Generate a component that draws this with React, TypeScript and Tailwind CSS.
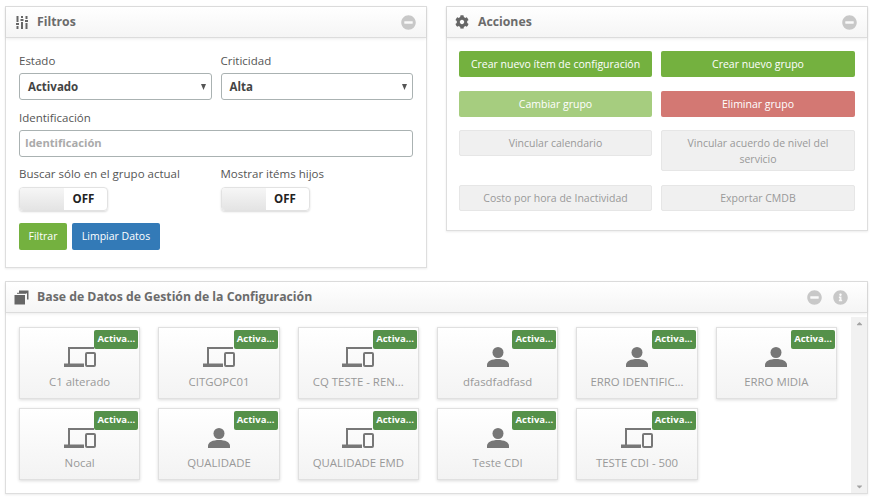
import { FC, ReactNode } from 'react';
import { FaCog, FaInfoCircle, FaMinusCircle, FaCaretDown, FaCaretUp } from 'react-icons/fa';

const SlidersIcon: FC = () => (
	<svg width="12" height="13" viewBox="0 0 12 13" fill="#666" className="shrink-0">
		<rect x="0.500" y="0" width="2" height="6" />
		<rect x="0" y="7" width="3" height="2" />
		<rect x="0.500" y="10" width="2" height="3" />
		<rect x="5" y="0" width="2" height="2" />
		<rect x="4.500" y="3" width="3" height="2" />
		<rect x="5" y="6" width="2" height="7" />
		<rect x="9.500" y="0" width="2" height="3" />
		<rect x="9" y="4" width="3" height="2" />
		<rect x="9.500" y="7" width="2" height="6" />
	</svg>
);

const StackIcon: FC = () => (
	<svg width="15" height="15" viewBox="0 0 15 15" fill="#666" className="shrink-0">
		<path d="M5 0.500h9.500v9h-1.500v-6.500h-8z" />
		<path d="M3 2.800h9.500v1h-9.500z" />
		<path d="M0.500 5h10.500v9.500h-10.500z" />
	</svg>
);

const DevicesIcon: FC = () => (
	<svg width="32" height="20" viewBox="0 0 32 20" fill="none" className="shrink-0">
		<path d="M5 17V1h25" stroke="#777" strokeWidth="2" />
		<path d="M0 18.250h20" stroke="#777" strokeWidth="3.500" />
		<rect x="22" y="6" width="9" height="13" rx="1" stroke="#777" strokeWidth="2" fill="#fafafa" />
	</svg>
);

const UserIcon: FC = () => (
	<svg width="22" height="20" viewBox="0 0 22 20" fill="#777" className="shrink-0">
		<circle cx="11" cy="5.500" r="5.500" />
		<path d="M0 20v-2c0-4 5-6 11-6s11 2 11 6v2z" />
	</svg>
);

const SelectCaret: FC = () => (
	<svg width="5" height="6" viewBox="0 0 5 6" fill="#555" className="shrink-0">
		<path d="M0 0h5L2.500 6z" />
	</svg>
);

const Panel: FC<{
	title: string;
	icon: ReactNode;
	actions?: ReactNode;
	className?: string;
	children: ReactNode;
}> = ({ title, icon, actions, className = '', children }) => (
	<section className={`border border-[#dedede] bg-white shadow-[0_1px_2px_rgba(0,0,0,0.08)] ${className}`}>
		<header className="flex h-[31px] items-center gap-[8px] border-b border-[#dcdcdc] bg-gradient-to-b from-white to-[#f5f5f5] pl-[8px] pr-[10px] shadow-[0_1px_3px_rgba(0,0,0,0.08)]">
			<span className="flex w-[15px] justify-center">{icon}</span>
			<h2 className="flex-1 text-[12.250px] font-bold text-[#6b6b6b]">{title}</h2>
			{actions ?? <FaMinusCircle className="text-[15px] text-[#c8c8c8]" />}
		</header>
		{children}
	</section>
);

const SelectBox: FC<{ value: string }> = ({ value }) => (
	<div className="flex h-[27px] items-center justify-between rounded-[3px] border border-[#aab2b2] bg-white pl-[8px] pr-[5px] text-[11.500px] font-bold text-[#444]">
		<span>{value}</span>
		<SelectCaret />
	</div>
);

const Toggle: FC = () => (
	<div className="flex h-[24px] w-[89px] overflow-hidden rounded-[4px] border border-[#e2e2e2] shadow-[0_1px_2px_rgba(0,0,0,0.15)]">
		<div className="w-[44px] bg-gradient-to-b from-[#f6f6f6] to-[#e4e4e4]" />
		<div className="flex flex-1 items-center justify-center pr-[4px] text-[11.500px] font-bold text-[#222]">OFF</div>
	</div>
);

const ActionButton: FC<{ className: string; children: ReactNode }> = ({ className, children }) => (
	<button type="button" className={`flex items-center justify-center rounded-[2px] px-[8px] text-center text-[10.500px] leading-[16px] ${className}`}>
		{children}
	</button>
);

type CiItem = { name: string; kind: 'device' | 'user' };

const items: CiItem[] = [
	{ name: 'C1 alterado', kind: 'device' },
	{ name: 'CITGOPC01', kind: 'device' },
	{ name: 'CQ TESTE - REN...', kind: 'device' },
	{ name: 'dfasdfadfasd', kind: 'user' },
	{ name: 'ERRO IDENTIFIC...', kind: 'user' },
	{ name: 'ERRO MIDIA', kind: 'user' },
	{ name: 'Nocal', kind: 'device' },
	{ name: 'QUALIDADE', kind: 'user' },
	{ name: 'QUALIDADE EMD', kind: 'device' },
	{ name: 'Teste CDI', kind: 'user' },
	{ name: 'TESTE CDI - 500', kind: 'device' },
];

const CiCard: FC<{ item: CiItem }> = ({ item }) => (
	<div className="relative flex h-[72px] flex-col items-center border border-[#e0e0e0] bg-gradient-to-b from-white to-[#f3f3f3] pt-[19px] shadow-[0_1px_3px_rgba(0,0,0,0.15)]">
		<span className="absolute right-[1px] top-[2px] flex h-[19px] w-[44px] items-center justify-center rounded-[2px] bg-[#55914a] text-[9.500px] font-bold text-white">
			Activa...
		</span>
		<div className="flex h-[20px] items-end">{item.kind === 'device' ? <DevicesIcon /> : <UserIcon />}</div>
		<span className="mt-[6px] text-[11.400px] text-[#999]">{item.name}</span>
	</div>
);

export default function App() {
	return (
		<div className="flex h-[502px] w-[884px] flex-col gap-[13px] overflow-hidden bg-white pl-[5px] pt-[6px] font-['Open_Sans',sans-serif]">
			<div className="flex items-start gap-[19px]">
				<Panel title="Filtros" icon={<SlidersIcon />} className="h-[262px] w-[422px]">
					<div className="px-[13px] pt-[15px]">
						<div className="grid grid-cols-2 gap-x-[9px]">
							<div>
								<label className="mb-[4px] block text-[11.500px] leading-[16px] text-[#555]">Estado</label>
								<SelectBox value="Activado" />
							</div>
							<div>
								<label className="mb-[4px] block text-[11.500px] leading-[16px] text-[#555]">Criticidad</label>
								<SelectBox value="Alta" />
							</div>
						</div>
						<label className="mb-[4px] mt-[10px] block text-[11.500px] leading-[16px] text-[#555]">Identificación</label>
						<div className="flex h-[27px] items-center rounded-[3px] border border-[#aab2b2] px-[5px] text-[11.200px] font-bold text-[#aaa]">
							Identificación
						</div>
						<div className="mt-[9px] grid grid-cols-2 gap-x-[9px]">
							<div>
								<label className="mb-[5px] block text-[11.500px] leading-[16px] text-[#555]">Buscar sólo en el grupo actual</label>
								<Toggle />
							</div>
							<div>
								<label className="mb-[5px] block text-[11.500px] leading-[16px] text-[#555]">Mostrar itéms hijos</label>
								<Toggle />
							</div>
						</div>
						<div className="mt-[12px] flex gap-[5px]">
							<button type="button" className="h-[27px] w-[48px] rounded-[2px] bg-[#74b13f] text-[10.500px] text-white">Filtrar</button>
							<button type="button" className="h-[27px] w-[88px] rounded-[2px] bg-[#337ab7] text-[10.500px] text-white">Limpiar Datos</button>
						</div>
					</div>
				</Panel>
				<Panel title="Acciones" icon={<FaCog className="-ml-[1px] text-[14px] text-[#666]" />} className="h-[225px] w-[422px]">
					<div className="grid grid-cols-[193px_194px] items-start gap-x-[9px] gap-y-[13.500px] px-[12px] pt-[13px]">
						<ActionButton className="h-[26px] bg-[#74b13f] text-white">Crear nuevo ítem de configuración</ActionButton>
						<ActionButton className="h-[26px] bg-[#74b13f] text-white">Crear nuevo grupo</ActionButton>
						<ActionButton className="h-[26px] bg-[#a6cd7f] text-white">Cambiar grupo</ActionButton>
						<ActionButton className="h-[26px] bg-[#d37873] text-white">Eliminar grupo</ActionButton>
						<ActionButton className="h-[26px] border border-[#e6e6e6] bg-[#f0f0f0] text-[#999]">Vincular calendario</ActionButton>
						<ActionButton className="h-[41px] border border-[#e6e6e6] bg-[#f0f0f0] text-[#999]">Vincular acuerdo de nivel del servicio</ActionButton>
						<ActionButton className="h-[26px] border border-[#e6e6e6] bg-[#f0f0f0] text-[#999]">Costo por hora de Inactividad</ActionButton>
						<ActionButton className="h-[26px] border border-[#e6e6e6] bg-[#f0f0f0] text-[#999]">Exportar CMDB</ActionButton>
					</div>
				</Panel>
			</div>
			<Panel
				title="Base de Datos de Gestión de la Configuración"
				icon={<StackIcon />}
				actions={
					<div className="flex items-center gap-[11px] pr-[9px]">
						<FaMinusCircle className="text-[15px] text-[#c8c8c8]" />
						<FaInfoCircle className="text-[15px] text-[#c8c8c8]" />
					</div>
				}
				className="h-[213px] w-[863px]"
			>
				<div className="flex h-[180px]">
					<div className="grid flex-1 grid-cols-6 content-start gap-x-[18px] gap-y-[9px] pl-[13px] pr-[14px] pt-[14px]">
						{items.map((item) => (
							<CiCard key={item.name} item={item} />
						))}
					</div>
					<div className="mt-[4px] flex w-[16px] flex-col items-center justify-between bg-[#f1f1f1] py-[2px] text-[9px] text-[#a3a3a3]">
						<FaCaretUp />
						<FaCaretDown />
					</div>
				</div>
			</Panel>
		</div>
	);
}
